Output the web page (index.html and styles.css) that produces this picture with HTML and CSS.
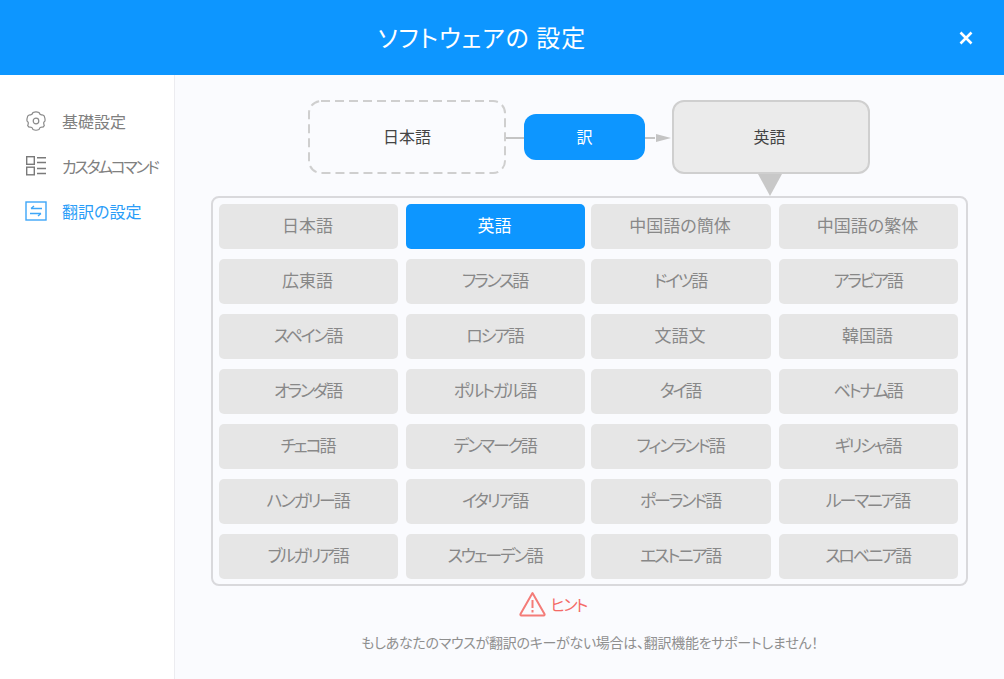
FILE: index.html
```html
<!DOCTYPE html>
<html lang="ja">
<head>
<meta charset="utf-8">
<title>ソフトウェアの設定</title>
<link rel="stylesheet" href="styles.css">
</head>
<body>
<header class="header">
  <h1 class="title">ソフトウェアの 設定</h1>
  <svg class="close" width="14" height="14" viewBox="0 0 14 14"><path d="M1.5 1.5l11 11M12.5 1.5l-11 11" stroke="#fff" stroke-width="2.6" fill="none"/></svg>
</header>
<div class="body">
  <nav class="sidebar">
    <a class="nav-item">
      <svg class="nav-icon" width="22" height="22" viewBox="0 0 22 22" fill="none" stroke="#8a8a8a" stroke-width="1.2"><path d="M8 2.5q3-1.4 6 0 .4 1.8 2.3 2.4 1.8-.5 3 1.2.9 2.4.7 4.9-2.2 1.3-.7 4.4-.9 2.2-3 1.8-1.9.4-2.3 2.3-3 1.5-6 0-.4-1.9-2.3-2.3-2.1.4-3-1.8 1.5-3.1-.7-4.4-.2-2.5.7-4.9 1.2-1.7 3-1.2Q7.600 4.300 8 2.500z"/><circle cx="11" cy="11" r="2.800"/></svg>
      <span>基礎設定</span>
    </a>
    <a class="nav-item">
      <svg class="nav-icon" width="22" height="22" viewBox="0 0 22 22" fill="none" stroke="#7a7a7a" stroke-width="1.400"><rect x="1.700" y="1.700" width="7.600" height="7.600"/><rect x="1.700" y="12.200" width="7.600" height="7.600"/><path d="M12 2.700h9M12 7.500h9M12 13.500h9M12 18.500h9"/></svg>
      <span class="nav-kana">カスタムコマンド</span>
    </a>
    <a class="nav-item nav-active">
      <svg class="nav-icon" width="22" height="20" viewBox="0 0 22 20" fill="none" stroke="#3ea6f8" stroke-width="1.400"><rect x="1" y="1" width="20" height="18"/><path d="M6 7.500h11M6 7.500l3-2.500M16 12.500H5M16 12.500l-3 2.500"/></svg>
      <span>翻訳の設定</span>
    </a>
  </nav>
  <main class="main">
    <div class="flow">
      <div class="box box-source">
        <svg class="dash" width="198" height="74" viewBox="0 0 198 74"><rect x="1" y="1" width="196" height="72" rx="12" fill="none" stroke="#cfcfcf" stroke-width="2" stroke-dasharray="9 5"/></svg>
        <span>日本語</span>
      </div>
      <div class="link link-plain"></div>
      <div class="translate">訳</div>
      <div class="link link-arrow"><i class="line"></i><i class="head"></i></div>
      <div class="box box-target"><span>英語</span><i class="pointer"></i></div>
    </div>
    <section class="panel">
      <button class="cell">日本語</button>
      <button class="cell cell-active">英語</button>
      <button class="cell">中国語の簡体</button>
      <button class="cell">中国語の繁体</button>
      <button class="cell">広東語</button>
      <button class="cell kana">フランス語</button>
      <button class="cell kana">ドイツ語</button>
      <button class="cell kana">アラビア語</button>
      <button class="cell kana">スペイン語</button>
      <button class="cell kana">ロシア語</button>
      <button class="cell">文語文</button>
      <button class="cell">韓国語</button>
      <button class="cell kana">オランダ語</button>
      <button class="cell kana">ポルトガル語</button>
      <button class="cell kana">タイ語</button>
      <button class="cell kana">ベトナム語</button>
      <button class="cell kana">チェコ語</button>
      <button class="cell kana">デンマーク語</button>
      <button class="cell kana">フィンランド語</button>
      <button class="cell kana">ギリシャ語</button>
      <button class="cell kana">ハンガリー語</button>
      <button class="cell kana">イタリア語</button>
      <button class="cell kana">ポーランド語</button>
      <button class="cell kana">ルーマニア語</button>
      <button class="cell kana">ブルガリア語</button>
      <button class="cell kana">スウェーデン語</button>
      <button class="cell kana">エストニア語</button>
      <button class="cell kana">スロベニア語</button>
    </section>
    <div class="hint">
      <svg width="27" height="26" viewBox="0 0 27 26" fill="none" stroke="#f47c78" stroke-width="2"><path d="M13.500 2 L25.500 23a1 1 0 0 1-.8 1.500H2.300a1 1 0 0 1-.8-1.500z" stroke-linejoin="round"/><path d="M13.500 9v8M13.500 19v2.500"/></svg>
      <span class="hint-text">ヒント</span>
    </div>
    <p class="note">もしあなたのマウスが翻訳のキーがない場合は、翻訳機能をサポートしません！</p>
  </main>
</div>
</body>
</html>
```
FILE: styles.css
```css
* { box-sizing: border-box; }
html, body { height: 100%; }
body {
  margin: 0;
  height: 679px;
  overflow: hidden;
  display: flex;
  flex-direction: column;
  background: #fff;
  font-family: "Noto Sans CJK JP", "Noto Sans", sans-serif;
  font-feature-settings: "palt";
  color: #444;
}
.header {
  height: 75px;
  flex: none;
  background: #0d96ff;
  display: flex;
  align-items: center;
  justify-content: center;
  position: relative;
}
.title {
  margin: 0 40px 1px 0;
  font-size: 24px;
  font-weight: 400;
  letter-spacing: 1px;
  color: #fff;
  line-height: 1;
}
.close { position: absolute; left: 959px; top: 31px; }
.body { flex: 1; display: flex; min-height: 0; }
.sidebar {
  width: 175px;
  flex: none;
  background: #fff;
  border-right: 1px solid #ececf0;
  padding: 34px 0 0 25px;
  display: flex;
  flex-direction: column;
  gap: 21px;
}
.nav-item {
  height: 24px;
  display: flex;
  align-items: center;
  gap: 15px;
  font-size: 16px;
  color: #808080;
  white-space: nowrap;
}
.nav-kana { letter-spacing: -2.4px; }
.nav-icon { flex: none; }
.nav-active { color: #2a9df8; }
.main {
  flex: 1;
  background: #fafbfe;
  padding: 25px 36px 0;
}
.flow {
  display: flex;
  align-items: center;
  height: 74px;
  padding-left: 97px;
}
.box {
  width: 198px;
  height: 74px;
  padding-bottom: 2px;
  border-radius: 12px;
  display: flex;
  align-items: center;
  justify-content: center;
  position: relative;
  font-size: 16px;
  color: #444;
}
.dash { position: absolute; left: 0; top: 0; }
.box-target {
  background: #ebebeb;
  border: 2px solid #cfcfcf;
  padding-right: 3px;
}
.pointer {
  position: absolute;
  left: 84px;
  top: 72px;
  width: 0;
  height: 0;
  border-left: 12px solid transparent;
  border-right: 12px solid transparent;
  border-top: 22px solid #c8c8c8;
}
.link { display: flex; align-items: center; height: 2px; margin-top: 2px; }
.link-plain { width: 18px; background: #c4c4c4; }
.link-arrow { width: 27px; }
.line { width: 10px; height: 2px; background: #c4c4c4; }
.head {
  width: 0;
  height: 0;
  margin-left: 1px;
  border-left: 15px solid #c4c4c4;
  border-top: 4px solid transparent;
  border-bottom: 4px solid transparent;
}
.translate {
  width: 121px;
  height: 46px;
  padding-bottom: 2px;
  background: #0d96ff;
  border-radius: 12px;
  color: #fff;
  font-size: 16px;
  display: flex;
  align-items: center;
  justify-content: center;
}
.panel {
  margin-top: 22px;
  width: 757px;
  height: 390px;
  border: 2px solid #d9d9dc;
  border-radius: 8px;
  padding: 6px;
  display: grid;
  grid-template-columns: 187px 185px 188px 179px;
  grid-auto-rows: 45px;
  row-gap: 10px;
}
.cell {
  width: 179px;
  height: 45px;
  padding: 0 2px 4px 0;
  border: 0;
  border-radius: 5px;
  background: #e6e6e6;
  color: #888;
  font: inherit;
  font-feature-settings: "palt";
  font-size: 17px;
  white-space: nowrap;
}
.cell.kana { letter-spacing: -2.2px; }
.cell:nth-child(4n+3) { width: 180px; }
.cell-active { background: #0d96ff; color: #fff; }
.hint {
  margin: 3px 74px 0 0;
  height: 30px;
  display: flex;
  align-items: center;
  justify-content: center;
  gap: 5px;
  font-size: 16px;
  color: #f46a66;
}
.hint-text { letter-spacing: -1.7px; }
.note {
  margin: 13px 0 0;
  text-align: center;
  font-size: 14px;
  letter-spacing: -0.28px;
  line-height: 20px;
  color: #8f8f8f;
  white-space: nowrap;
}
```
